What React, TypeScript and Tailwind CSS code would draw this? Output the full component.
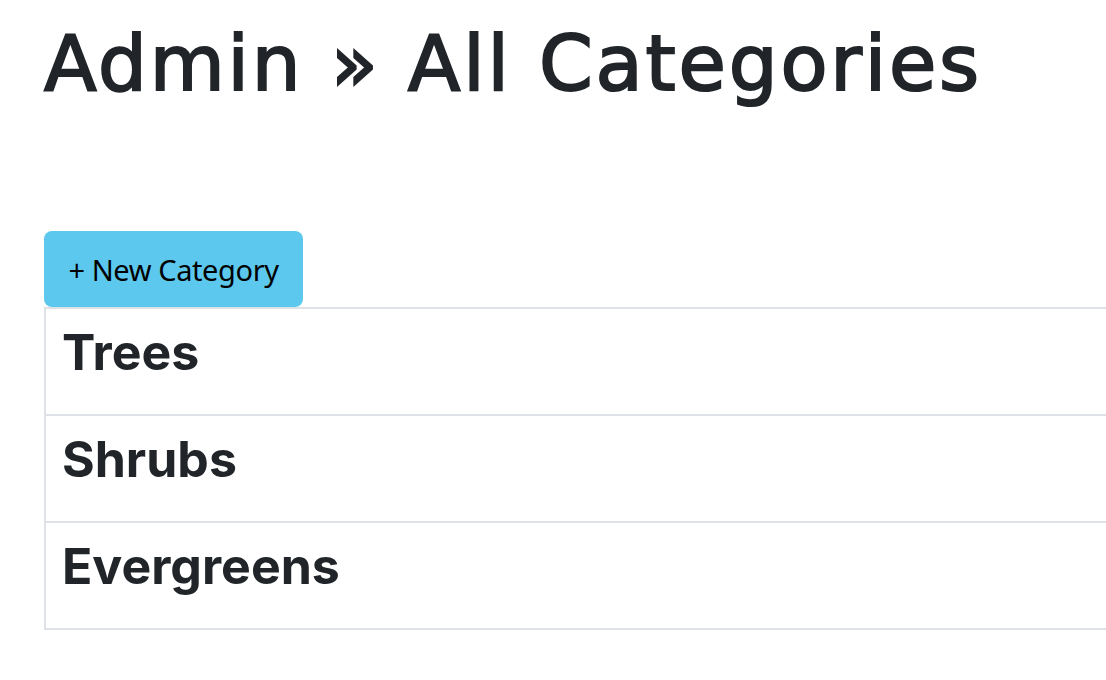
export default function App() {
  const categories = ['Trees', 'Shrubs', 'Evergreens'];

  return (
    <div className="min-h-[680px] w-full overflow-hidden bg-white pl-[44px] text-[#212529]">
      <h1 className="pt-[18px] font-['DejaVu_Sans',sans-serif] text-[77px] font-normal leading-[1.2] tracking-[2.8px] [-webkit-text-stroke:2px_#212529]">
        Admin » All Categories
      </h1>

      <div className="mt-[121px]">
        <button className="flex h-[76px] w-[259px] items-center justify-center rounded-[8px] bg-[#5cc8ed] font-['Noto_Sans',sans-serif] text-[29px] tracking-[-0.4px] text-black">
          + New Category
        </button>

        <div className="w-[calc(100%+40px)] border-l-2 border-t-2 border-[#dee2e6]">
          {categories.map((name) => (
            <div key={name} className="h-[107px] border-b-2 border-[#dee2e6] px-4 pt-[13px]">
              <h3 className="font-['Inter',sans-serif] text-[50px] font-bold leading-[1.2]">{name}</h3>
            </div>
          ))}
        </div>
      </div>
    </div>
  );
}
